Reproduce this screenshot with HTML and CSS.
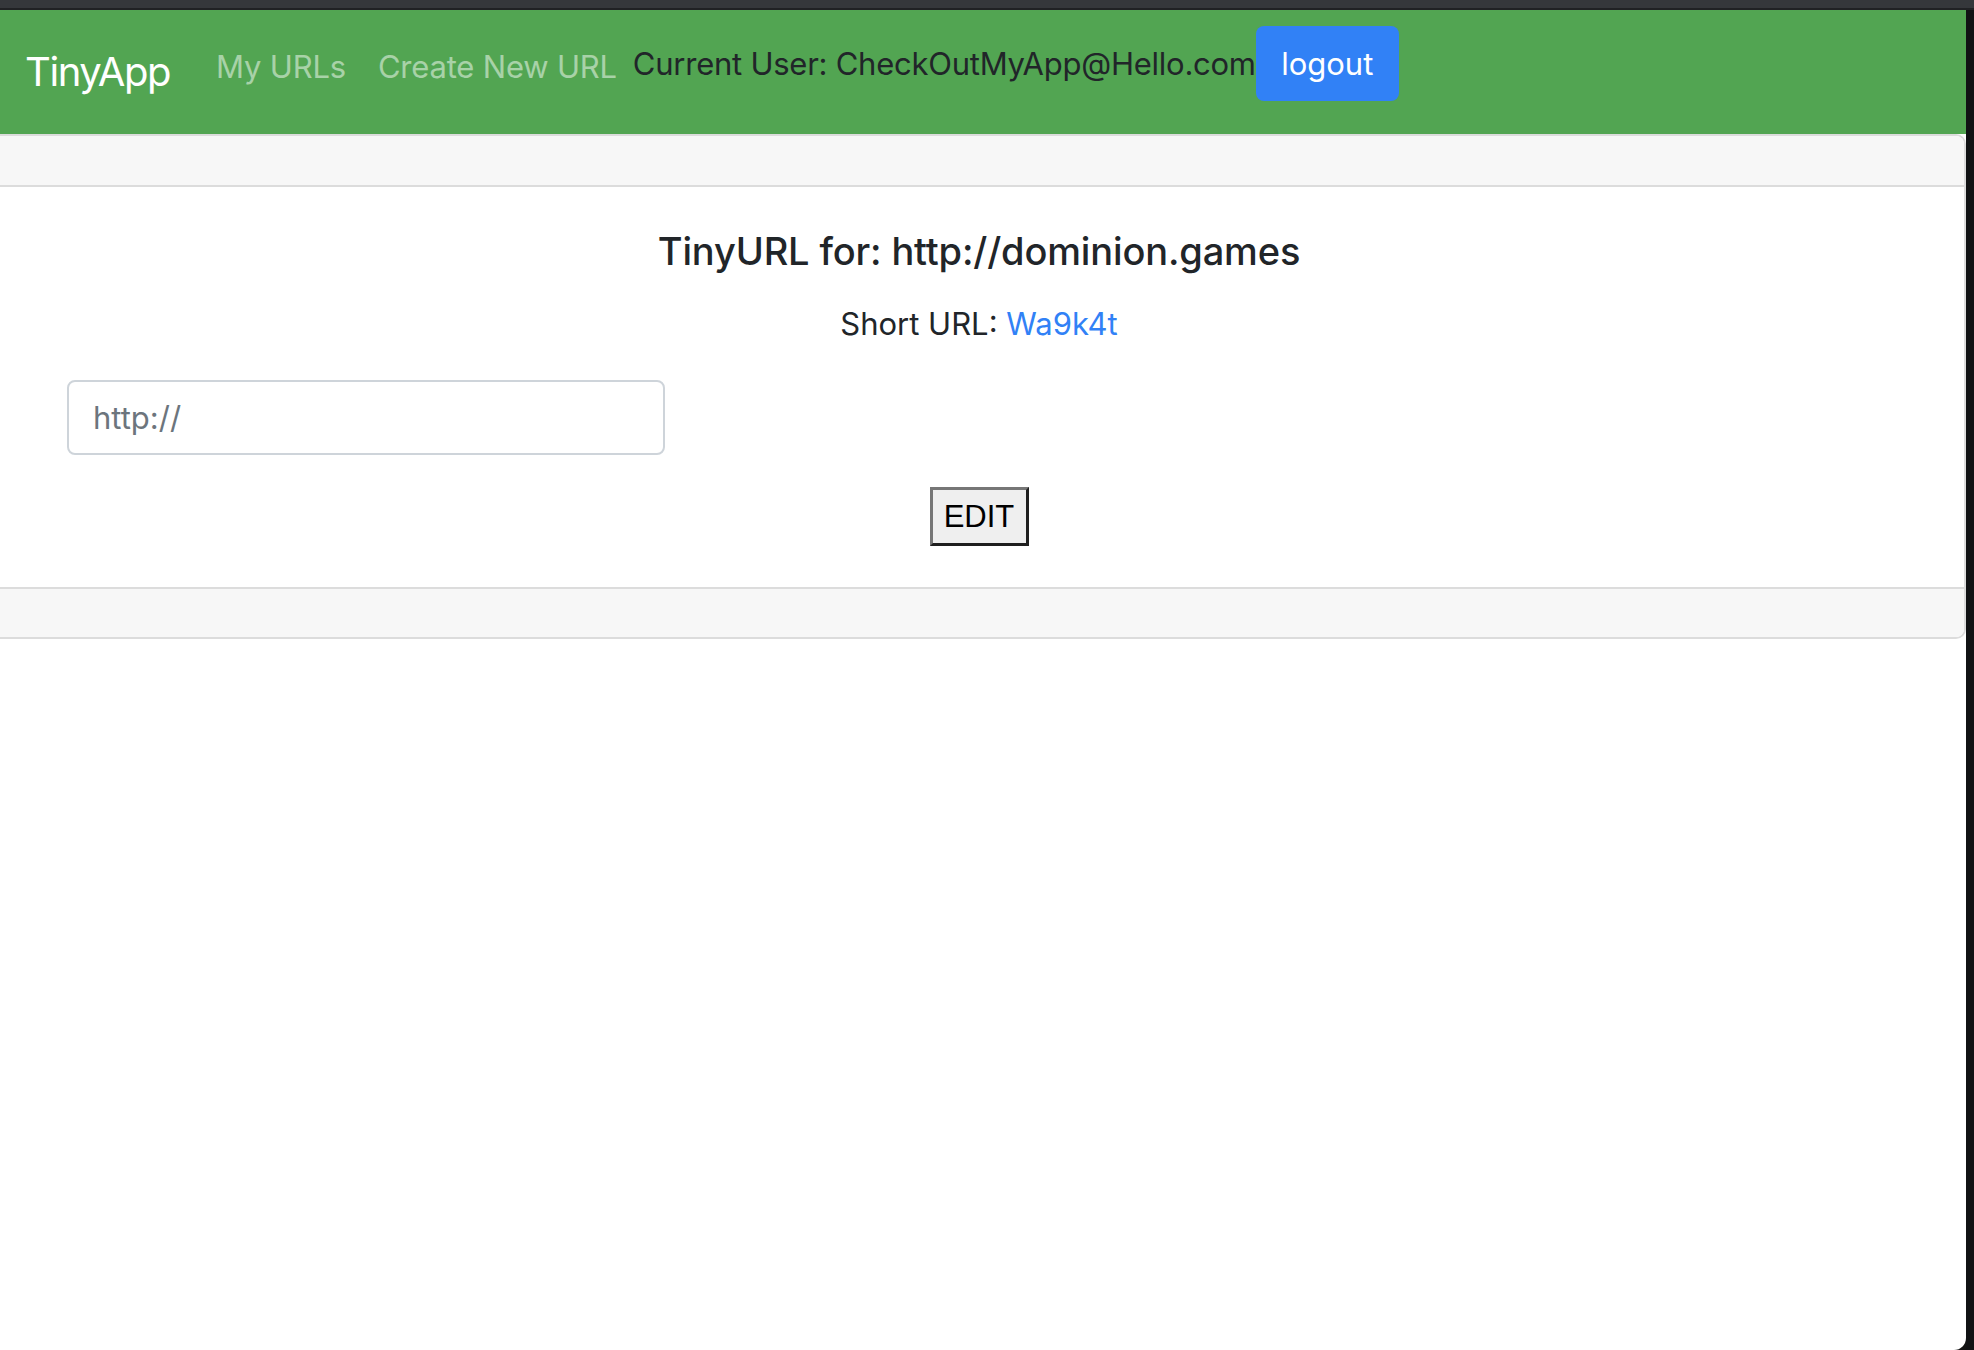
FILE: index.html
```html
<!DOCTYPE html>
<html lang="en">
<head>
<meta charset="utf-8">
<title>TinyApp</title>
<link rel="stylesheet" href="styles.css">
</head>
<body>
  <div class="topbar"></div>
  <div class="window">
    <div class="page">
      <nav class="navbar">
        <a class="brand" href="#">TinyApp</a>
        <ul class="nav">
          <li><a class="nav-link" href="#">My URLs</a></li>
          <li><a class="nav-link" href="#">Create New URL</a></li>
        </ul>
        <span class="user">Current User: CheckOutMyApp@Hello.com</span>
        <button class="btn-logout" type="button">logout</button>
      </nav>
      <div class="card">
        <div class="card-header"></div>
        <div class="card-body">
          <h5 class="card-title">TinyURL for: http://dominion.games</h5>
          <p class="card-text">Short URL: <a href="#">Wa9k4t</a></p>
          <form class="edit-form">
            <div class="form-row">
              <input class="form-control" type="text" placeholder="http://">
            </div>
            <div class="form-actions">
              <button class="btn-edit" type="button">EDIT</button>
            </div>
          </form>
        </div>
        <div class="card-footer"></div>
      </div>
    </div>
    <div class="strip"></div>
  </div>
</body>
</html>
```

FILE: styles.css
```css
html, body {
  margin: 0;
  padding: 0;
  height: 100%;
}

body {
  background: #141414;
  font-family: "Inter", "Noto Sans", sans-serif;
  color: #212529;
  overflow: hidden;
}

.topbar {
  height: 8px;
  background: #35373b;
  border-bottom: 2px solid #202124;
}

.window {
  display: flex;
  height: 1340px;
}

.page {
  width: 1966px;
  background: #ffffff;
  border-bottom-right-radius: 12px;
}

.strip {
  flex: 1;
  background: #111214;
}

/* Navbar */
.navbar {
  display: flex;
  align-items: flex-start;
  height: 124px;
  box-sizing: border-box;
  background: #52a552;
  padding-left: 25px;
}

.brand {
  font-size: 40px;
  line-height: 48px;
  margin-top: 38px;
  margin-right: 30px;
  color: #ffffff;
  text-decoration: none;
  letter-spacing: -1.4px;
}

.nav {
  display: flex;
  list-style: none;
  margin: 0;
  padding: 0;
}

.nav-link {
  display: block;
  padding: 0 16px;
  margin-top: 34px;
  font-size: 31px;
  line-height: 46px;
  color: rgba(255, 255, 255, 0.5);
  text-decoration: none;
  letter-spacing: -0.2px;
}

.user {
  margin-top: 31px;
  font-size: 31px;
  line-height: 46px;
  color: #212529;
  letter-spacing: -0.25px;
}

.btn-logout {
  margin-top: 16px;
  width: 143px;
  height: 75px;
  border: none;
  border-radius: 8px;
  background: #3181f6;
  color: #ffffff;
  font-family: "Inter", "Noto Sans", sans-serif;
  font-size: 31px;
  padding: 0;
}

/* Card */
.card {
  border: 2px solid #dcdcdc;
  border-left: none;
  border-radius: 0 10px 10px 0;
  background: #ffffff;
  overflow: hidden;
}

.card-header {
  height: 49px;
  background: #f7f7f7;
  border-bottom: 2px solid #dcdcdc;
}

.card-body {
  padding: 40px 46px 41px 40px;
  text-align: center;
}

.card-title {
  margin: 0 0 25px;
  font-size: 38px;
  line-height: 48px;
  font-weight: 500;
  color: #212529;
  letter-spacing: -0.15px;
}

.card-text {
  margin: 0 0 32px;
  font-size: 31px;
  line-height: 48px;
  color: #212529;
}

.card-text a {
  color: #3181f6;
  text-decoration: none;
}

.edit-form {
  margin: 0;
}

.form-row {
  display: flex;
  padding-left: 27px;
  margin-bottom: 32px;
}

.form-control {
  width: 598px;
  height: 75px;
  box-sizing: border-box;
  padding: 0 24px;
  border: 2px solid #ced4da;
  border-radius: 8px;
  font-family: "Inter", "Noto Sans", sans-serif;
  font-size: 31px;
  color: #495057;
  background: #ffffff;
}

.form-control::placeholder {
  color: #6c757d;
}

.form-actions {
  display: flex;
  justify-content: center;
}

.btn-edit {
  width: 99px;
  height: 59px;
  box-sizing: border-box;
  padding: 0;
  border: 3px solid;
  border-color: #767676 #1f1f1f #1f1f1f #767676;
  background: #efefef;
  color: #000000;
  font-family: "Liberation Sans", Arial, sans-serif;
  font-size: 31px;
}

.card-footer {
  height: 48px;
  background: #f7f7f7;
  border-top: 2px solid #dcdcdc;
}
```
